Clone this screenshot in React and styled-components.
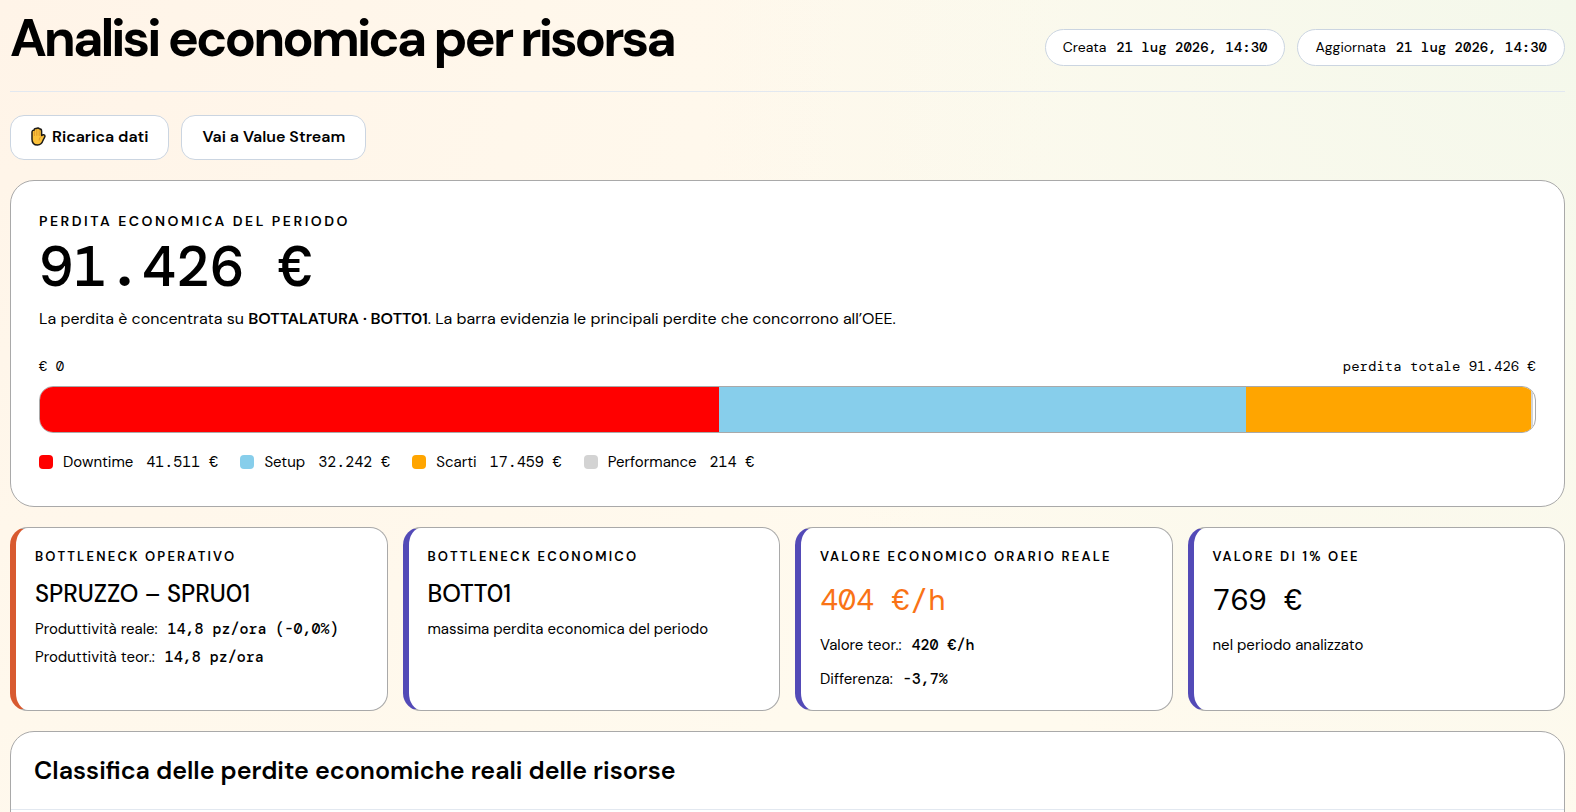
import React from "react";
import styled, { createGlobalStyle } from "styled-components";

const losses = [
  { name: "Downtime", value: "41.511 €", share: 45.4, color: "#ff0000" },
  { name: "Setup", value: "32.242 €", share: 35.3, color: "#87ceeb" },
  { name: "Scarti", value: "17.459 €", share: 19, color: "#ffa500" },
  { name: "Performance", value: "214 €", share: 0.2, color: "#d3d3d3" },
];

function HandIcon() {
  return (
    <svg width="15" height="19" viewBox="0 0 15 19" aria-hidden="true">
      <path
        d="M1 5.2C1 3.6 2.2 3 3 3.2C3.2 1.8 4.6 1.2 5.4 1.6C6.2 0.8 7.8 0.8 8.4 1.8C9.8 1.8 10.6 2.8 10.6 4.2V8.6C11.8 7.4 14 7.6 14 9.2C13.8 10.6 12.6 11.6 12 13.4C11.2 16 9.4 18 6.6 18C3 18 1 15.6 1 12.2Z"
        fill="#fbc13a"
        stroke="#1c1a17"
        strokeWidth="1.5"
        strokeLinejoin="round"
      />
      <path
        d="M3.4 4.4V8.6M5.8 3V8.4M8.2 3.4V8.6M10.6 9.4C9 10 8.2 11.2 8.2 13"
        fill="none"
        stroke="#d8912a"
        strokeWidth="0.8"
        strokeLinecap="round"
      />
    </svg>
  );
}

function App() {
  return (
    <Page>
      <GlobalStyle />
      <Header>
        <Title>Analisi economica per risorsa</Title>
        <Pills>
          <Pill>
            Creata <Strong>21 lug 2026, 14:30</Strong>
          </Pill>
          <Pill>
            Aggiornata <Strong>21 lug 2026, 14:30</Strong>
          </Pill>
        </Pills>
      </Header>

      <Actions>
        <ActionButton type="button">
          <HandIcon />
          Ricarica dati
        </ActionButton>
        <ActionButton as="a" href="#value-stream">
          Vai a Value Stream
        </ActionButton>
      </Actions>

      <LossPanel>
        <PanelLabel>Perdita economica del periodo</PanelLabel>
        <Total>91.426 €</Total>
        <Description>
          La perdita è concentrata su <b>BOTTALATURA · BOTT01</b>. La barra
          evidenzia le principali perdite che concorrono all’OEE.
        </Description>

        <Scale>
          <span>€ 0</span>
          <span>perdita totale 91.426 €</span>
        </Scale>
        <Bar>
          {losses.map((loss) => (
            <Segment
              key={loss.name}
              $color={loss.color}
              style={{ width: `${loss.share}%` }}
            />
          ))}
        </Bar>
        <Legend>
          {losses.map((loss) => (
            <LegendItem key={loss.name}>
              <Swatch $color={loss.color} />
              {loss.name}
              <LegendValue>{loss.value}</LegendValue>
            </LegendItem>
          ))}
        </Legend>
      </LossPanel>

      <Cards>
        <Card $accent="#d85a30">
          <CardLabel>Bottleneck operativo</CardLabel>
          <CardName>SPRUZZO – SPRU01</CardName>
          <CardText>
            Produttività reale: <Strong>14,8 pz/ora (-0,0%)</Strong>
          </CardText>
          <CardText>
            Produttività teor.: <Strong>14,8 pz/ora</Strong>
          </CardText>
        </Card>

        <Card>
          <CardLabel>Bottleneck economico</CardLabel>
          <CardName>BOTT01</CardName>
          <CardText>massima perdita economica del periodo</CardText>
        </Card>

        <Card>
          <CardLabel>Valore economico orario reale</CardLabel>
          <CardNumber $color="#f97316">404 €/h</CardNumber>
          <CardText $spaced>
            Valore teor.: <Strong>420 €/h</Strong>
          </CardText>
          <CardText $spaced>
            Differenza: <Strong>-3,7%</Strong>
          </CardText>
        </Card>

        <Card>
          <CardLabel>Valore di 1% OEE</CardLabel>
          <CardNumber>769 €</CardNumber>
          <CardText $spaced>nel periodo analizzato</CardText>
        </Card>
      </Cards>

      <RankingPanel>
        <RankingHead>
          <RankingTitle>
            Classifica delle perdite economiche reali delle risorse
          </RankingTitle>
        </RankingHead>
      </RankingPanel>
    </Page>
  );
}

export default App;

const sans = `"DM Sans", Inter, "Open Sans", sans-serif`;
const mono = `"DM Mono", "Liberation Mono", monospace`;

const GlobalStyle = createGlobalStyle`
  * {
    box-sizing: border-box;
  }

  html,
  body {
    margin: 0;
  }

  body {
    min-height: 100vh;
    font-family: ${sans};
    color: #000;
    background:
      radial-gradient(circle at top left, #fff4e8 0%, rgba(255, 244, 232, 0) 60%),
      radial-gradient(circle at top right, #f4f8eb 0%, rgba(244, 248, 235, 0) 50%),
      #fffaee;
  }

  h1,
  h2,
  h3,
  p {
    margin: 0;
  }
`;

const Page = styled.main`
  height: 100vh;
  overflow: hidden;
  padding: 10px 11px 0 10px;
`;

const Header = styled.header`
  display: flex;
  align-items: flex-end;
  justify-content: space-between;
  padding-bottom: 25px;
  border-bottom: 1px solid #e2e8f0;
`;

const Title = styled.h1`
  font-size: 52px;
  line-height: 56px;
  font-weight: 700;
  letter-spacing: -3px;
`;

const Pills = styled.div`
  display: flex;
  gap: 12px;
`;

const Strong = styled.strong`
  font-family: ${mono};
  font-weight: 500;
`;

const Pill = styled.div`
  display: flex;
  align-items: center;
  gap: 10px;
  height: 37px;
  padding: 0 17px 1px;
  border: 1px solid #cbd5e1;
  border-radius: 999px;
  background: #fff;
  font-size: 14px;
`;

const Actions = styled.div`
  display: flex;
  gap: 12px;
  margin: 23px 0 20px;
`;

const ActionButton = styled.button`
  display: flex;
  align-items: center;
  gap: 6px;
  height: 45px;
  padding: 0 20px 2px;
  border: 1px solid #cbd5e1;
  border-radius: 14px;
  background: #fff;
  color: #000;
  font-family: ${sans};
  font-size: 16px;
  font-weight: 600;
  text-decoration: none;
  cursor: pointer;
`;

const LossPanel = styled.section`
  padding: 28px 28px 32px;
  border: 1px solid #a9a9a9;
  border-radius: 24px;
  background: #fff;
`;

const PanelLabel = styled.h2`
  font-size: 14px;
  line-height: 24px;
  font-weight: 600;
  letter-spacing: 0.18em;
  text-transform: uppercase;
`;

const Total = styled.div`
  font-family: ${mono};
  font-size: 57px;
  line-height: 68px;
  font-weight: 500;
`;

const Description = styled.p`
  font-size: 16px;
  line-height: 28px;
  margin-top: 4px;

  b {
    font-weight: 600;
  }
`;

const Scale = styled.div`
  display: flex;
  justify-content: space-between;
  margin: 23px 0 10px;
  font-family: ${mono};
  font-size: 14px;
  line-height: 20px;
`;

const Bar = styled.div`
  display: flex;
  height: 47px;
  border: 1px solid #a9a9a9;
  border-radius: 14px;
  overflow: hidden;
`;

const Segment = styled.div`
  background: ${(props) => props.$color};
`;

const Legend = styled.div`
  display: flex;
  flex-wrap: wrap;
  gap: 22px;
  margin-top: 17px;
`;

const LegendItem = styled.div`
  display: flex;
  align-items: center;
  gap: 10px;
  font-size: 15px;
  line-height: 24px;
`;

const Swatch = styled.span`
  width: 14px;
  height: 14px;
  border-radius: 4px;
  background: ${(props) => props.$color};
`;

const LegendValue = styled.span`
  margin-left: 3px;
  font-family: ${mono};
`;

const Cards = styled.div`
  display: grid;
  grid-template-columns: repeat(4, 1fr);
  gap: 15px;
  margin: 20px 0;
`;

const Card = styled.article`
  padding: 17px 19px 14px;
  border: 1px solid #a9a9a9;
  border-left: 6px solid ${(props) => props.$accent || "#534ab7"};
  border-radius: 18px;
  background: #fff;
`;

const CardLabel = styled.h3`
  font-size: 13px;
  line-height: 24px;
  font-weight: 600;
  letter-spacing: 0.17em;
  text-transform: uppercase;
`;

const CardName = styled.div`
  margin: 8px 0 4px;
  font-size: 24px;
  line-height: 34px;
  font-weight: 500;
`;

const CardNumber = styled.div`
  margin: 8px 0 5px;
  font-family: ${mono};
  font-size: 30px;
  line-height: 46px;
  color: ${(props) => props.$color || "#000"};
`;

const CardText = styled.p`
  font-size: 15px;
  line-height: ${(props) => (props.$spaced ? "34px" : "28px")};

  ${Strong} {
    margin-left: 6px;
  }
`;

const RankingPanel = styled.section`
  height: 320px;
  border: 1px solid #a9a9a9;
  border-radius: 24px;
  background: #fff;
`;

const RankingHead = styled.div`
  padding: 22px 23px;
  border-bottom: 1px solid #e2e8f0;
`;

const RankingTitle = styled.h2`
  font-size: 25px;
  line-height: 33px;
  font-weight: 600;
`;
